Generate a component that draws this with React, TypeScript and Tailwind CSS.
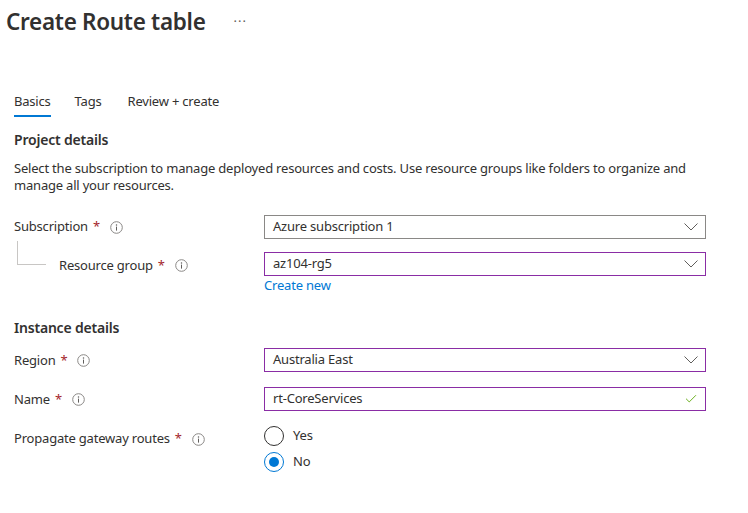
import { Check } from 'lucide-react'

// Small helpers for the Azure-style form
function InfoIcon() {
  return (
    <svg width="13" height="13" viewBox="0 0 13 13" className="shrink-0">
      <circle cx="6.5" cy="6.5" r="5.8" fill="none" stroke="#8a8886" strokeWidth="1" />
      <circle cx="6.5" cy="4" r="0.75" fill="#605e5c" />
      <rect x="6" y="5.6" width="1" height="4" fill="#605e5c" />
    </svg>
  )
}

function Chevron() {
  return (
    <svg width="14" height="8" viewBox="0 0 14 8" className="shrink-0">
      <polyline points="0.5,0.5 7,7 13.5,0.5" fill="none" stroke="#605e5c" strokeWidth="1" />
    </svg>
  )
}

function FieldLabel({ text, required = true }: { text: string; required?: boolean }) {
  return (
    <span className="flex items-center text-[13px] tracking-[-0.2px]">
      <span>{text}</span>
      {required && <span className="ml-[5px] text-[#a4262c]">*</span>}
      <span className="ml-[10px]">
        <InfoIcon />
      </span>
    </span>
  )
}

function Select({ value, muted = false }: { value: string; muted?: boolean }) {
  return (
    <div
      className={
        'flex h-[24px] w-[442px] items-center justify-between border pl-[8px] pr-[7px] text-[13px] tracking-[-0.2px] ' +
        (muted ? 'border-[#8a8886]' : 'border-[#8a2da5]')
      }
    >
      <span>{value}</span>
      <Chevron />
    </div>
  )
}

export default function App() {
  return (
    <div className="h-[513px] w-[748px] bg-white text-[#323130] font-['Segoe_UI','Noto_Sans',sans-serif]">
      {/* Header */}
      <div className="flex h-[44px] items-center pl-[6px]">
        <h1 className="text-[22.5px] font-semibold leading-none tracking-[-0.3px]">Create Route table</h1>
        <span className="ml-[28px] text-[13px] tracking-[1px] text-[#605e5c]">···</span>
      </div>

      <div className="mt-[46px] px-[14px] tracking-[-0.2px]">
        {/* Tabs */}
        <div className="flex gap-[24px] text-[13px]">
          <div className="flex flex-col">
            <span className="leading-[22px]">Basics</span>
            <span className="mt-[3px] h-[2px] bg-[#0078d4]" />
          </div>
          <span className="leading-[22px]">Tags</span>
          <span className="ml-[2px] leading-[22px]">Review + create</span>
        </div>

        {/* Project details */}
        <h2 className="mt-[13px] text-[14px] font-semibold leading-[20px]">Project details</h2>
        <p className="mt-[10px] w-[700px] text-[13px] leading-[17px]">
          Select the subscription to manage deployed resources and costs. Use resource groups like folders to
          organize and manage all your resources.
        </p>

        <div className="mt-[21px] flex items-center">
          <div className="w-[250px]">
            <FieldLabel text="Subscription" />
          </div>
          <Select value="Azure subscription 1" muted />
        </div>

        <div className="mt-[13px] flex items-center">
          <div className="flex w-[250px] items-center">
            <span className="-mt-[23px] ml-[3px] h-[24px] w-[29px] border-b border-l border-[#c8c6c4]" />
            <span className="ml-[13px] pt-[3px]">
              <FieldLabel text="Resource group" />
            </span>
          </div>
          <Select value="az104-rg5" />
        </div>
        <div className="ml-[250px] mt-[1px] text-[13px] leading-[16px] text-[#0078d4]">Create new</div>

        {/* Instance details */}
        <h2 className="mt-[25px] text-[14px] font-semibold leading-[20px]">Instance details</h2>

        <div className="mt-[10px] flex items-center">
          <div className="w-[250px] pt-[1px]">
            <FieldLabel text="Region" />
          </div>
          <Select value="Australia East" />
        </div>

        <div className="mt-[15px] flex items-center">
          <div className="w-[250px] pt-[1px]">
            <FieldLabel text="Name" />
          </div>
          <div className="flex h-[24px] w-[442px] items-center justify-between border border-[#8a2da5] pl-[8px] pr-[7px] text-[13px]">
            <span>rt-CoreServices</span>
            <Check className="h-[14px] w-[14px] text-[#57a300]" strokeWidth={1.5} />
          </div>
        </div>

        <div className="mt-[15px] flex items-start">
          <div className="flex h-[20px] w-[250px] items-center pt-[6px]">
            <FieldLabel text="Propagate gateway routes" />
          </div>
          <div className="flex flex-col gap-[6px] text-[13px]">
            <label className="flex items-center gap-[9px]">
              <span className="h-[20px] w-[20px] rounded-full border border-[#323130]" />
              <span>Yes</span>
            </label>
            <label className="flex items-center gap-[9px]">
              <span className="flex h-[20px] w-[20px] items-center justify-center rounded-full border border-[#0078d4]">
                <span className="h-[10px] w-[10px] rounded-full bg-[#0078d4]" />
              </span>
              <span>No</span>
            </label>
          </div>
        </div>
      </div>
    </div>
  )
}
